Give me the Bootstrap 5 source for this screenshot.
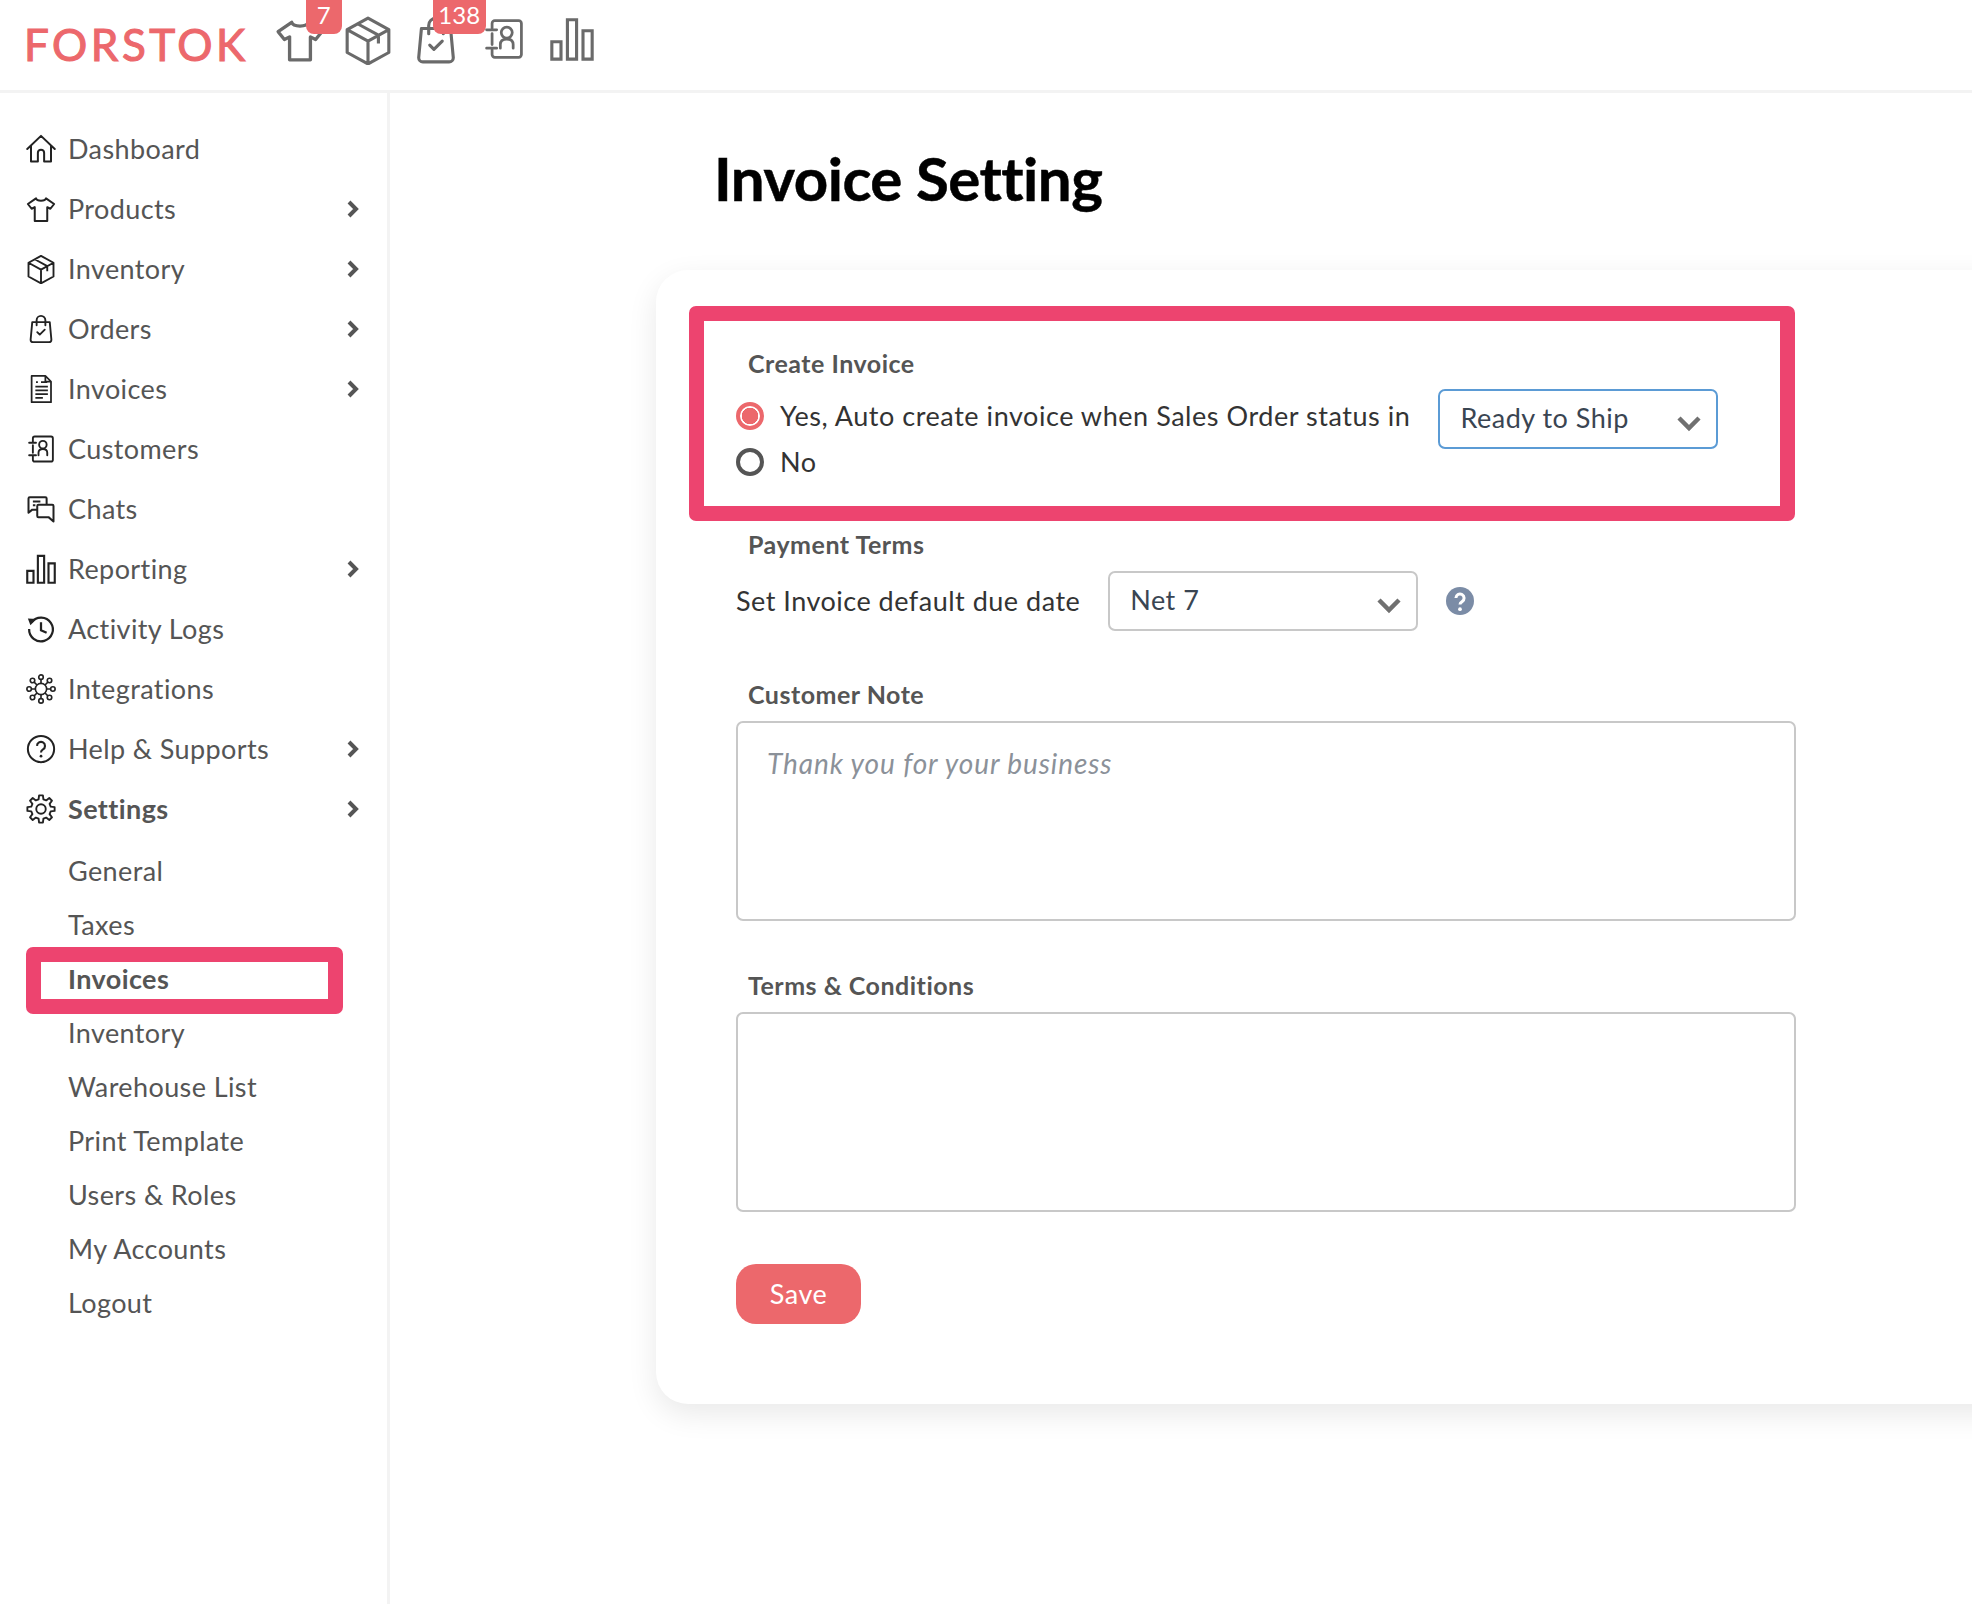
<!DOCTYPE html>
<html lang="en">
<head>
<meta charset="utf-8">
<title>Invoice Setting</title>
<link href="https://cdn.jsdelivr.net/npm/bootstrap@5.3.0/dist/css/bootstrap.min.css" rel="stylesheet">
<style>
html,body{height:1604px;overflow:hidden;background:#fff;font-family:"Lato","Liberation Sans",sans-serif;color:#333}
.topbar{height:93px;border-bottom:3px solid #f3f3f3;padding:0 0 0 24px;align-items:flex-start;flex-wrap:nowrap;justify-content:flex-start}
.brandmark{font-size:44px;line-height:1;font-weight:400;letter-spacing:3.5px;color:#ec686c;padding:0;margin:22px 26px 0 0;-webkit-text-stroke:1.1px #ec686c}
.quick{gap:18px;margin-top:15px}
.quick svg{display:block;width:50px;height:50px;color:#6a6a6a}
.quick svg.trim{height:44px;margin-top:2px}
.quick .qi{position:relative}
.countpill{position:absolute;top:-15px;background:#ec686c;color:#fff;font-size:24px;font-weight:400;line-height:30px;height:34px;padding:0;border-radius:0 0 8px 8px;text-align:center}
.c7{left:31px;width:36px}
.c138{left:22px;width:53px}
.shell{height:1511px}
.sidebar{width:390px;flex:none;border-right:3px solid #f3f3f3;padding-top:26px}
.sideitem{height:60px;padding:0 27px 0 26px;color:#555;font-size:27px;letter-spacing:.4px;text-decoration:none}
.sideitem svg.ico{width:30px;height:30px;margin-right:12px;color:#222;flex:none}
.sideitem .chev{width:14px;height:18px;margin-left:auto;color:#555}
.sideitem.isopen{font-weight:700}
.subnav{padding-top:5px}
.subitem{height:54px;padding-left:68px;display:flex;align-items:center;color:#555;font-size:27px;letter-spacing:.4px;text-decoration:none;position:relative}
.subitem.isopen{font-weight:700}
.annot{position:absolute;border:15px solid #ed446f;border-radius:7px;pointer-events:none}
.annot.side{left:26px;top:-5px;width:317px;height:67px}
.annot.form{left:33px;top:36px;width:1106px;height:215px}
.pane{flex:1;min-width:0;padding-left:266px;overflow:hidden}
.pagetitle{font-family:"Lato","Liberation Sans",sans-serif;font-weight:700;font-size:60px;line-height:70px;letter-spacing:-.5px;color:#000;-webkit-text-stroke:.5px #000;margin:50px 0 0 58px;height:127px}
.formcard{width:1500px;height:1134px;border-radius:32px;border:0;box-shadow:0 10px 30px rgba(0,0,0,.09);padding:78px 0 0 80px;position:relative}
.formbody{width:1060px}
.fieldhead{font-size:25px;font-weight:700;letter-spacing:.5px;line-height:30px;color:#555;padding-left:12px;margin:0 0 12px}
.rowone{height:60px;gap:28px;margin-top:-1px}
.radioline{display:flex;align-items:center;margin:-1px 0 0;padding:0;min-height:0;font-size:27px;letter-spacing:.55px;line-height:28px;color:#333}
.radioline .form-check-input{float:none;margin:0 16px 0 0;width:28px;height:28px;border:4px solid #555;background-image:none;flex:none}
.radioline .form-check-input:checked{border:4px solid #ec686c;background:radial-gradient(circle,#ec686c 0 8px,#fff 8.5px 10px,#ec686c 10.5px)}
.rowone .radioline{position:relative;top:-3px}
.pickbox{font-size:27px;letter-spacing:.5px;height:60px;padding:0 40px 2px 20px;color:#3a4552;border:2px solid #c8c8c8;border-radius:7px;background-position:right 15px top 20px;background-size:24px 24px;font-family:inherit;background-image:url("data:image/svg+xml,%3csvg xmlns='http://www.w3.org/2000/svg' viewBox='0 0 24 24'%3e%3cpath fill='none' stroke='%23707070' stroke-width='4.5' d='M2 7l10 10L22 7'/%3e%3c/svg%3e")}
.pickbox.w-ship{width:280px;border-color:#5b9bd5}
.pickbox.w-net{width:310px}
.section-pay{margin-top:53px}
.section-note{margin-top:48px}
.section-terms{margin-top:49px}
.dueline{font-size:27px;letter-spacing:.5px;color:#333;gap:28px}
.helpdot{width:28px;height:28px;display:block}
.notearea{height:200px;border:2px solid #c8c8c8;border-radius:7px;padding:19px 29px;font-size:28px;letter-spacing:.9px;resize:none;font-family:inherit;box-shadow:none}
.notearea::placeholder{font-style:italic;color:#8b9199;opacity:1}
.savebtn{margin-top:52px;width:125px;height:60px;background:#ec686c;border:0;border-radius:20px;color:#fff;font-size:27px;letter-spacing:.5px;padding:0}
</style>
</head>
<body>
<svg width="0" height="0" class="d-none">
<defs>
<symbol id="i-home" viewBox="0 0 24 24"><path d="M1 12L12 1.500 23 12M4 9.500V22h5.500v-7a2.500 2.500 0 0 1 5 0v7H20V9.500" fill="none" stroke="currentColor" stroke-width="1.600" stroke-linejoin="round" stroke-linecap="round"/></symbol>
<symbol id="i-shirt" viewBox="0 0 24 24"><path d="M8 3.500L1.500 8l3 3.800L7 10.500V21.500h10V10.500l2.500 1.300 3-3.800L16 3.500c-.8 2.400-7.200 2.400-8 0z" fill="none" stroke="currentColor" stroke-width="1.600" stroke-linejoin="round"/></symbol>
<symbol id="i-box" viewBox="0 0 24 24"><path d="M12 1.500l10 5.500v11l-10 5.500L2 18V7zM2 7l10 5.500L22 7M12 12.500v11M7 4.200l10 5.500v4" fill="none" stroke="currentColor" stroke-width="1.500" stroke-linejoin="round"/></symbol>
<symbol id="i-bag" viewBox="0 0 24 24"><path d="M5 6.500h14l1.300 14a2 2 0 0 1-2 2H5.700a2 2 0 0 1-2-2zM8.500 9V5a3.500 3.500 0 0 1 7 0v4M9 14.500l2 2 4-4" fill="none" stroke="currentColor" stroke-width="1.500" stroke-linejoin="round" stroke-linecap="round"/></symbol>
<symbol id="i-doc" viewBox="0 0 24 24"><path d="M4.500 1.500h11l4.500 4.500v16.500H4.500zM15.500 1.500V6H20M8 6.500h1.500M12 6.500h5M7.500 10h10M7.500 13h10M7.500 16h10M7.500 19h6" fill="none" stroke="currentColor" stroke-width="1.400" stroke-linejoin="round"/></symbol>
<symbol id="i-contact" viewBox="0 0 24 24"><path d="M5.500 6V3.500a1.500 1.500 0 0 1 1.500-1.500h13a1.500 1.500 0 0 1 1.500 1.500v17a1.500 1.500 0 0 1-1.500 1.500H7a1.500 1.500 0 0 1-1.500-1.500V18M5.500 9v6M2.500 7H8M2.500 17H8M10 17v-2c0-2 1.500-3 3.500-3s3.500 1 3.500 3v2" fill="none" stroke="currentColor" stroke-width="1.500" stroke-linecap="round"/><circle cx="13.500" cy="8.500" r="3" fill="none" stroke="currentColor" stroke-width="1.500"/></symbol>
<symbol id="i-chat" viewBox="0 0 24 24"><path d="M16.500 8V3.500a1 1 0 0 0-1-1H3a1 1 0 0 0-1 1V15l3-2.500h4M10 8.500h11a1 1 0 0 1 1 1V22l-4-3.500h-8a1 1 0 0 1-1-1v-8a1 1 0 0 1 1-1zM5.500 6h6M5.500 9h2" fill="none" stroke="currentColor" stroke-width="1.600" stroke-linejoin="round"/></symbol>
<symbol id="i-bars" viewBox="0 0 24 24"><path d="M1 13.500h5V23H1zM9.500 1.500h5V23h-5zM18 7.500h5V23h-5z" fill="none" stroke="currentColor" stroke-width="1.700"/></symbol>
<symbol id="i-hist" viewBox="0 0 24 24"><path d="M4.500 6.500A9.500 9.500 0 1 1 2.500 12M12 6.500V13l4.500 2" fill="none" stroke="currentColor" stroke-width="1.800"/><path d="M1.500 3.500l7 .5-5 5z" fill="currentColor"/></symbol>
<symbol id="i-net" viewBox="0 0 24 24"><g fill="none" stroke="currentColor" stroke-width="1.300"><circle cx="12" cy="12" r="4.500"/><circle cx="12" cy="2.500" r="1.800"/><circle cx="12" cy="21.500" r="1.800"/><circle cx="2.500" cy="12" r="1.800"/><circle cx="21.500" cy="12" r="1.800"/><circle cx="5.200" cy="5.200" r="1.800"/><circle cx="18.800" cy="5.200" r="1.800"/><circle cx="5.200" cy="18.800" r="1.800"/><circle cx="18.800" cy="18.800" r="1.800"/><path d="M12 4.300v3.200M12 16.500v3.200M4.300 12h3.200M16.500 12h3.200M6.500 6.500l2.300 2.300M17.500 6.500l-2.300 2.300M6.500 17.500l2.300-2.300M17.500 17.500l-2.300-2.300"/></g></symbol>
<symbol id="i-help" viewBox="0 0 24 24"><circle cx="12" cy="12" r="10.500" fill="none" stroke="currentColor" stroke-width="1.600"/><path d="M8.800 9.500a3.200 3.200 0 1 1 4.800 2.800c-1 .6-1.600 1.200-1.600 2.400" fill="none" stroke="currentColor" stroke-width="1.700"/><circle cx="12" cy="17.700" r="1.100" fill="currentColor"/></symbol>
<symbol id="i-gear" viewBox="0 0 24 24"><g fill="none" stroke="currentColor" stroke-width="1.500" stroke-linejoin="round"><circle cx="12" cy="12" r="3.800"/><path transform="translate(12 12) scale(1 -1)" d="M-1.940 7.760L-1.530 10.890L1.530 10.890L1.940 7.760L4.120 6.860L6.620 8.780L8.780 6.620L6.860 4.120L7.760 1.940L10.890 1.530L10.890 -1.530L7.760 -1.940L6.860 -4.120L8.780 -6.620L6.620 -8.780L4.120 -6.860L1.940 -7.760L1.530 -10.890L-1.530 -10.890L-1.940 -7.760L-4.120 -6.860L-6.620 -8.780L-8.780 -6.620L-6.860 -4.120L-7.760 -1.940L-10.890 -1.530L-10.890 1.530L-7.760 1.940L-6.860 4.120L-8.780 6.620L-6.620 8.780L-4.120 6.860z"/></g></symbol>
<symbol id="i-chev" viewBox="0 0 14 18"><path d="M3 2l7 7-7 7" fill="none" stroke="currentColor" stroke-width="4"/></symbol>
</defs>
</svg>

<nav class="navbar topbar d-flex">
  <a class="navbar-brand brandmark" href="#">FORSTOK</a>
  <div class="d-flex quick">
    <div class="qi"><svg><use href="#i-shirt"/></svg><span class="countpill c7">7</span></div>
    <div class="qi"><svg><use href="#i-box"/></svg></div>
    <div class="qi"><svg><use href="#i-bag"/></svg><span class="countpill c138">138</span></div>
    <div class="qi"><svg class="trim"><use href="#i-contact"/></svg></div>
    <div class="qi"><svg class="trim"><use href="#i-bars"/></svg></div>
  </div>
</nav>

<div class="d-flex shell">
  <aside class="sidebar">
    <a class="sideitem d-flex align-items-center" href="#"><svg class="ico"><use href="#i-home"/></svg>Dashboard</a>
    <a class="sideitem d-flex align-items-center" href="#"><svg class="ico"><use href="#i-shirt"/></svg>Products<svg class="chev"><use href="#i-chev"/></svg></a>
    <a class="sideitem d-flex align-items-center" href="#"><svg class="ico"><use href="#i-box"/></svg>Inventory<svg class="chev"><use href="#i-chev"/></svg></a>
    <a class="sideitem d-flex align-items-center" href="#"><svg class="ico"><use href="#i-bag"/></svg>Orders<svg class="chev"><use href="#i-chev"/></svg></a>
    <a class="sideitem d-flex align-items-center" href="#"><svg class="ico"><use href="#i-doc"/></svg>Invoices<svg class="chev"><use href="#i-chev"/></svg></a>
    <a class="sideitem d-flex align-items-center" href="#"><svg class="ico"><use href="#i-contact"/></svg>Customers</a>
    <a class="sideitem d-flex align-items-center" href="#"><svg class="ico"><use href="#i-chat"/></svg>Chats</a>
    <a class="sideitem d-flex align-items-center" href="#"><svg class="ico"><use href="#i-bars"/></svg>Reporting<svg class="chev"><use href="#i-chev"/></svg></a>
    <a class="sideitem d-flex align-items-center" href="#"><svg class="ico"><use href="#i-hist"/></svg>Activity Logs</a>
    <a class="sideitem d-flex align-items-center" href="#"><svg class="ico"><use href="#i-net"/></svg>Integrations</a>
    <a class="sideitem d-flex align-items-center" href="#"><svg class="ico"><use href="#i-help"/></svg>Help &amp; Supports<svg class="chev"><use href="#i-chev"/></svg></a>
    <a class="sideitem isopen d-flex align-items-center" href="#"><svg class="ico"><use href="#i-gear"/></svg>Settings<svg class="chev"><use href="#i-chev"/></svg></a>
    <div class="subnav">
      <a class="subitem" href="#">General</a>
      <a class="subitem" href="#">Taxes</a>
      <a class="subitem isopen" href="#">Invoices<span class="annot side"></span></a>
      <a class="subitem" href="#">Inventory</a>
      <a class="subitem" href="#">Warehouse List</a>
      <a class="subitem" href="#">Print Template</a>
      <a class="subitem" href="#">Users &amp; Roles</a>
      <a class="subitem" href="#">My Accounts</a>
      <a class="subitem" href="#">Logout</a>
    </div>
  </aside>

  <main class="pane">
    <h1 class="pagetitle">Invoice Setting</h1>
    <div class="card formcard">
      <span class="annot form"></span>
      <form class="formbody">
        <p class="fieldhead">Create Invoice</p>
        <div class="d-flex align-items-center rowone">
          <label class="form-check radioline"><input class="form-check-input" type="radio" name="auto" checked>Yes, Auto create invoice when Sales Order status in</label>
          <select class="form-select pickbox w-ship"><option>Ready to Ship</option></select>
        </div>
        <label class="form-check radioline"><input class="form-check-input" type="radio" name="auto">No</label>

        <div class="section-pay">
          <p class="fieldhead">Payment Terms</p>
          <div class="d-flex align-items-center dueline">
            <span>Set Invoice default due date</span>
            <select class="form-select pickbox w-net"><option>Net 7</option></select>
            <svg class="helpdot" viewBox="0 0 24 24"><circle cx="12" cy="12" r="12" fill="#7b8ca6"/><path d="M8.500 9.500a3.500 3.500 0 1 1 5.300 3c-1.200.7-1.800 1.100-1.800 2.500" fill="none" stroke="#fff" stroke-width="2.600"/><circle cx="12" cy="19" r="1.600" fill="#fff"/></svg>
          </div>
        </div>

        <div class="section-note">
          <p class="fieldhead">Customer Note</p>
          <textarea class="form-control notearea" placeholder="Thank you for your business"></textarea>
        </div>

        <div class="section-terms">
          <p class="fieldhead">Terms &amp; Conditions</p>
          <textarea class="form-control notearea"></textarea>
        </div>

        <button type="button" class="btn savebtn">Save</button>
      </form>
    </div>
  </main>
</div>
<script src="https://cdn.jsdelivr.net/npm/bootstrap@5.3.0/dist/js/bootstrap.bundle.min.js"></script>
</body>
</html>
